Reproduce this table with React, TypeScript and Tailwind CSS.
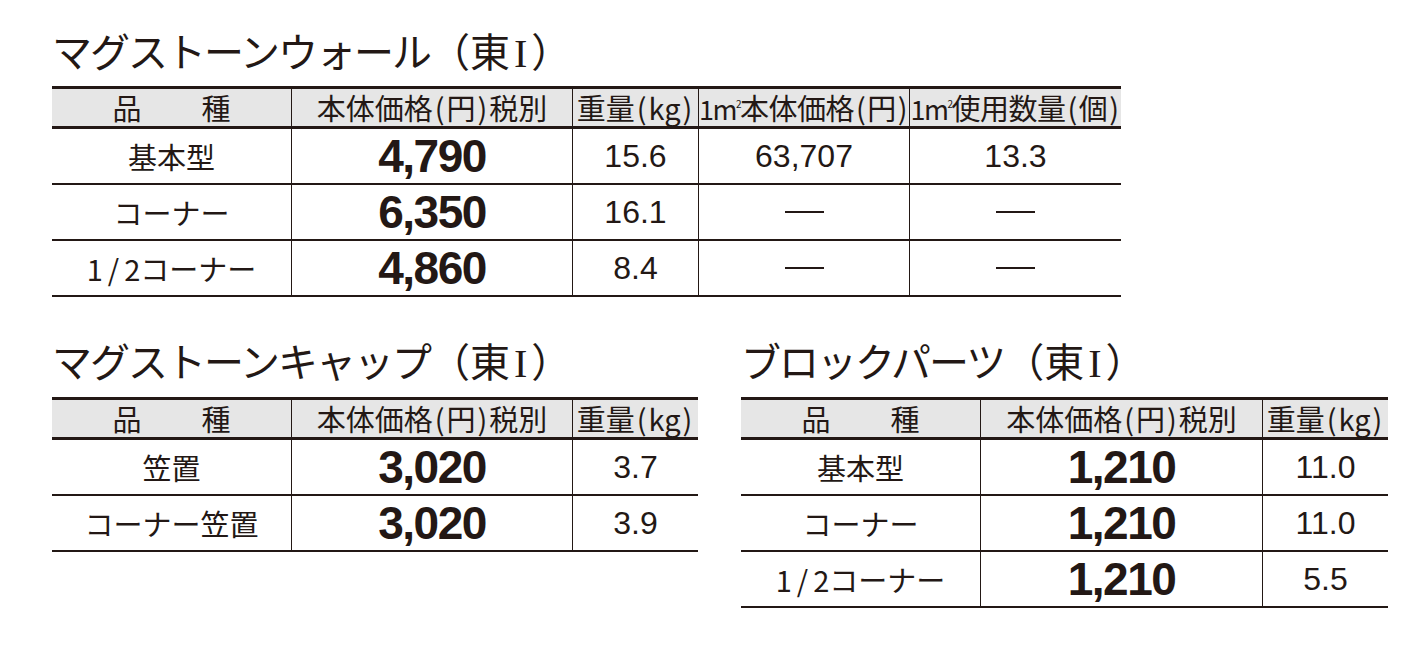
import type { ReactNode } from 'react'

const jp = "font-['Noto_Sans_CJK_JP',sans-serif]"
const num = "font-['Liberation_Sans',Arial,sans-serif]"

// half-width parens with a little air, like the print catalogue
function Paren({ children }: { children: ReactNode }) {
  return (
    <>
      <span className="px-[2px]">(</span>
      {children}
      <span className="px-[2px]">)</span>
    </>
  )
}

function Title({ children }: { children: ReactNode }) {
  return (
    <h2 className={`${jp} h-[40px] text-[40px] leading-[40px] tracking-[-2px] text-[#231815] whitespace-nowrap`}>
      {children}
      <span className="tracking-normal">（東<span className="font-['Liberation_Serif',serif] mx-[4px]">I</span>）</span>
    </h2>
  )
}

function Price({ v }: { v: string }) {
  return <span className={`${num} font-bold text-[46px] leading-none tracking-[-1.5px]`}>{v}</span>
}

function Val({ v }: { v: string }) {
  return <span className={`${num} text-[32px] leading-none`}>{v}</span>
}

function Dash() {
  return <span className="block w-[39px] h-[2px] bg-[#231815]" />
}

function Half() {
  return (
    <span>
      <span className="tracking-[5px]">1/</span>2
    </span>
  )
}

function Table({
  cols,
  head,
  rows,
}: {
  cols: string
  head: ReactNode[]
  rows: ReactNode[][]
}) {
  return (
    <div className="text-[#231815] leading-none">
      <div className={`grid ${cols} h-[43px] border-y-[3px] border-[#231815] bg-[#e6e6e6]`}>
        {head.map((h, i) => (
          <div
            key={i}
            className={`${jp} flex items-center justify-center text-[29px] leading-none whitespace-nowrap ${i > 0 ? 'border-l border-[#231815]' : ''}`}
          >
            {h}
          </div>
        ))}
      </div>
      {rows.map((r, ri) => (
        <div key={ri} className={`grid ${cols} h-[56px] border-b-2 border-[#231815]`}>
          {r.map((c, ci) => (
            <div
              key={ci}
              className={`flex items-center justify-center leading-none whitespace-nowrap ${ci === 0 ? `${jp} text-[29px]` : 'border-l border-[#231815]'}`}
            >
              {c}
            </div>
          ))}
        </div>
      ))}
    </div>
  )
}

const hinshu = (
  <span className="flex gap-[60px]">
    <span>品</span>
    <span>種</span>
  </span>
)
const honntai = (
  <span>
    本体価格<Paren>円</Paren>税別
  </span>
)
const juryo = (
  <span>
    重量<Paren>kg</Paren>
  </span>
)
const m2 = (
  <span className="text-[27px] tracking-[-1.5px]">
    1m<sup className="text-[10px] -top-[12px]">2</sup>
  </span>
)

export default function App() {
  return (
    <div className="min-h-screen bg-white pl-[52px] pt-[30px]">
      <Title>マグストーンウォール</Title>
      <div className="mt-4 w-[1069px]">
        <Table
          cols="grid-cols-[239px_281px_126px_211px_212px]"
          head={[
            hinshu,
            honntai,
            juryo,
            <span className="tracking-[-0.5px]">
              {m2}本体価格<Paren>円</Paren>
            </span>,
            <span className="tracking-[-0.5px]">
              {m2}使用数量<Paren>個</Paren>
            </span>,
          ]}
          rows={[
            ['基本型', <Price v="4,790" />, <Val v="15.6" />, <Val v="63,707" />, <Val v="13.3" />],
            ['コーナー', <Price v="6,350" />, <Val v="16.1" />, <Dash />, <Dash />],
            [<span><Half />コーナー</span>, <Price v="4,860" />, <Val v="8.4" />, <Dash />, <Dash />],
          ]}
        />
      </div>

      <div className="mt-[43px] flex gap-[43px]">
        <div className="w-[646px]">
          <Title>マグストーンキャップ</Title>
          <div className="mt-[17px]">
            <Table
              cols="grid-cols-[239px_281px_126px]"
              head={[hinshu, honntai, juryo]}
              rows={[
                ['笠置', <Price v="3,020" />, <Val v="3.7" />],
                ['コーナー笠置', <Price v="3,020" />, <Val v="3.9" />],
              ]}
            />
          </div>
        </div>
        <div className="w-[647px]">
          <Title>ブロックパーツ</Title>
          <div className="mt-[17px]">
            <Table
              cols="grid-cols-[239px_282px_126px]"
              head={[hinshu, honntai, juryo]}
              rows={[
                ['基本型', <Price v="1,210" />, <Val v="11.0" />],
                ['コーナー', <Price v="1,210" />, <Val v="11.0" />],
                [<span><Half />コーナー</span>, <Price v="1,210" />, <Val v="5.5" />],
              ]}
            />
          </div>
        </div>
      </div>
    </div>
  )
}
